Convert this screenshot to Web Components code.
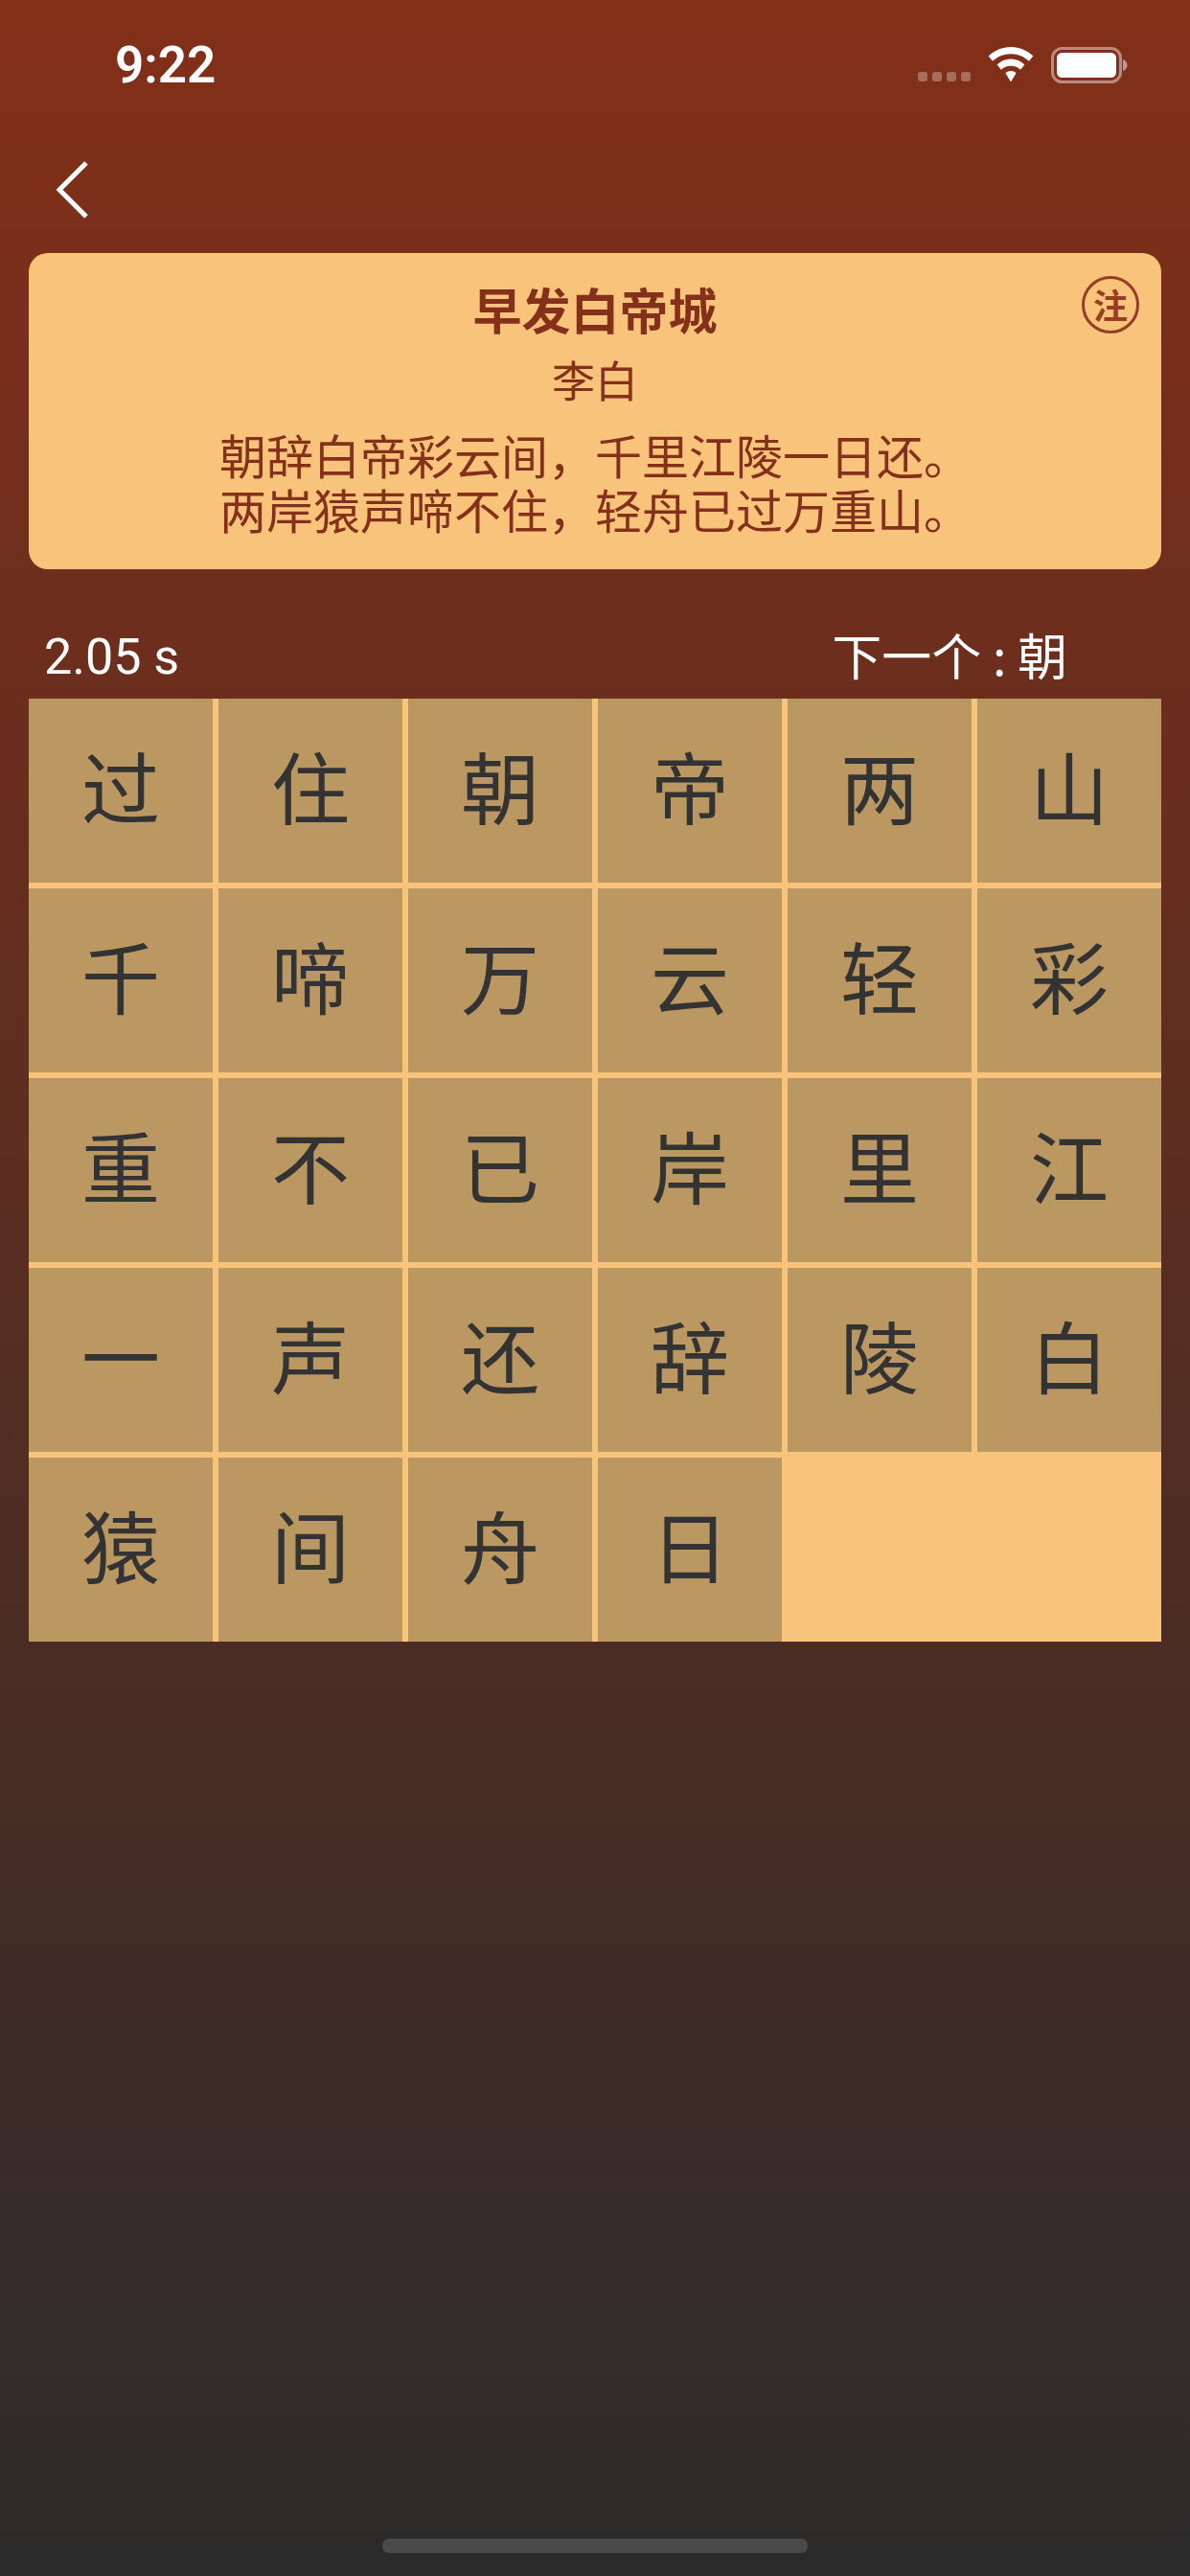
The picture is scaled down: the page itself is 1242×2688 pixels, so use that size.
<!DOCTYPE html>
<html lang="zh">
<head>
<meta charset="utf-8">
<title>早发白帝城</title>
<style>
html, body { margin: 0; padding: 0; }
</style>
</head>
<body>
<app-screen>
    <status-bar time="9:22"></status-bar>
    <nav-bar></nav-bar>
    <poem-card>
        <span slot="title">早发白帝城</span>
        <span slot="author">李白</span>
        <span slot="line">朝辞白帝彩云间，千里江陵一日还。</span>
        <span slot="line">两岸猿声啼不住，轻舟已过万重山。</span>
    </poem-card>
    <game-info time="2.05 s" next="朝"></game-info>
    <char-grid chars="过住朝帝两山千啼万云轻彩重不已岸里江一声还辞陵白猿间舟日"></char-grid>
    <home-bar></home-bar>
</app-screen>

<script>
const CJK = '"Noto Sans CJK SC", "Noto Sans", sans-serif';

//Pantalla completa, el degradado va aqui
class AppScreen extends HTMLElement {
    constructor() {
        super();
        this.attachShadow({ mode: "open" });
    }
    connectedCallback() {
        this.shadowRoot.innerHTML = `
        <style>
            :host {
                display: flex;
                flex-direction: column;
                width: 1242px;
                height: 2688px;
                overflow: hidden;
                background: linear-gradient(180deg, #832f18 0%, #2b2b2b 100%);
                font-family: ${CJK};
            }
        </style>
        <slot></slot>
        `;
    }
}

class StatusBar extends HTMLElement {
    constructor() {
        super();
        this.attachShadow({ mode: "open" });
    }
    connectedCallback() {
        this.shadowRoot.innerHTML = `
        <style>
            :host {
                display: flex;
                justify-content: space-between;
                height: 130px;
                padding: 38px 65px 0 120px;
                box-sizing: border-box;
                color: #fff;
            }
            .time {
                font: 600 53px/60px Roboto, "Liberation Sans", sans-serif;
            }
            .icons {
                display: flex;
                align-items: flex-start;
                padding-top: 11px;
            }
            .dots {
                display: flex;
                gap: 5px;
                margin-top: 26px;
                margin-right: 18px;
            }
            .dots i {
                width: 10px;
                height: 10px;
                border-radius: 3px;
                background: rgba(255, 255, 255, .3);
            }
            .wifi { margin-right: 18px; }
            svg { display: block; }
        </style>
        <div class="time">${this.getAttribute("time")}</div>
        <div class="icons">
            <div class="dots"><i></i><i></i><i></i><i></i></div>
            <svg class="wifi" width="48" height="37" viewBox="0 0 48 37">
                <path fill="#fff" d="M24 0C15 0 7 3.600 .6 9.500L5 14.800C10 10 16.700 7.200 24 7.200S38 10 43 14.800L47.400 9.500C41 3.600 33 0 24 0Z"/>
                <path fill="#fff" d="M24 12.500C18.500 12.500 13.500 14.700 9.600 18.400L14 23.700C16.600 21.200 20.100 19.700 24 19.700S31.400 21.200 34 23.700L38.400 18.400C34.500 14.700 29.500 12.500 24 12.500Z"/>
                <path fill="#fff" d="M24 25C21.800 25 19.900 25.800 18.400 27.200L24 36.500L29.600 27.200C28.100 25.800 26.200 25 24 25Z"/>
            </svg>
            <svg width="80" height="38" viewBox="0 0 80 38">
                <rect x="1.500" y="1.500" width="71" height="35" rx="10" fill="none" stroke="#fff" stroke-opacity=".45" stroke-width="3"/>
                <rect x="6" y="6" width="62" height="26" rx="5.500" fill="#fff"/>
                <path fill="#fff" fill-opacity=".5" d="M75 13C78 14 79.500 16.500 79.500 19S78 24 75 25Z"/>
            </svg>
        </div>
        `;
    }
}

class NavBar extends HTMLElement {
    constructor() {
        super();
        this.attachShadow({ mode: "open" });
    }
    connectedCallback() {
        this.shadowRoot.innerHTML = `
        <style>
            :host {
                display: block;
                height: 134px;
                padding: 38px 0 0 59px;
                box-sizing: border-box;
            }
            svg { display: block; }
        </style>
        <svg width="34" height="60" viewBox="0 0 34 60">
            <path d="M31 2L3 30L31 58" fill="none" stroke="#fff" stroke-width="5"/>
        </svg>
        `;
    }
}

//Tarjeta del poema: titulo, autor y versos por slot
class PoemCard extends HTMLElement {
    constructor() {
        super();
        this.attachShadow({ mode: "open" });
    }
    connectedCallback() {
        this.shadowRoot.innerHTML = `
        <style>
            :host {
                display: block;
                position: relative;
                margin: 0 30px;
                height: 330px;
                box-sizing: border-box;
                padding-top: 24px;
                border-radius: 20px;
                background: #f8c37b;
                color: #85301a;
                text-align: center;
            }
            ::slotted(span) { display: block; }
            .title { font-size: 51px; line-height: 68px; font-weight: 600; }
            .author { font-size: 45px; line-height: 64px; margin-top: 8px; }
            .lines { display: flex; flex-direction: column; font-size: 49px; line-height: 57px; margin-top: 17px; }
            .note {
                position: absolute;
                top: 24px;
                right: 23px;
                width: 60px;
                height: 60px;
                box-sizing: border-box;
                border: 3px solid #973d22;
                border-radius: 50%;
                color: #973d22;
                font-size: 36px;
                font-weight: 600;
                line-height: 52px;
            }
        </style>
        <div class="title"><slot name="title"></slot></div>
        <div class="author"><slot name="author"></slot></div>
        <div class="lines"><slot name="line"></slot></div>
        <div class="note">注</div>
        `;
    }
}

class GameInfo extends HTMLElement {
    constructor() {
        super();
        this.attachShadow({ mode: "open" });
    }
    connectedCallback() {
        this.shadowRoot.innerHTML = `
        <style>
            :host {
                display: flex;
                justify-content: space-between;
                align-items: center;
                height: 135px;
                padding: 38px 128px 0 46px;
                box-sizing: border-box;
                color: #fff;
                font-size: 52px;
            }
            .time { font: 400 52px Roboto, "Liberation Sans", sans-serif; margin-top: 10px; }
            .next { margin-top: 3px; }
        </style>
        <div class="time">${this.getAttribute("time")}</div>
        <div class="next">下一个 : ${this.getAttribute("next")}</div>
        `;
    }
}

class CharCell extends HTMLElement {
    constructor() {
        super();
        this.attachShadow({ mode: "open" });
    }
    connectedCallback() {
        this.shadowRoot.innerHTML = `
        <style>
            :host {
                display: flex;
                align-items: center;
                justify-content: center;
                box-sizing: border-box;
                padding-bottom: 12px;
                background: #bb9761;
                color: #333;
                font-size: 82px;
                line-height: 1;
            }
        </style>
        <slot></slot>
        `;
    }
}

class CharGrid extends HTMLElement {
    constructor() {
        super();
        this.attachShadow({ mode: "open" });
    }
    connectedCallback() {
        const cells = [...this.getAttribute("chars")]
            .map(c => `<char-cell>${c}</char-cell>`)
            .join("");
        this.shadowRoot.innerHTML = `
        <style>
            :host {
                display: grid;
                grid-template-columns: repeat(6, 192px);
                grid-auto-rows: 192px;
                gap: 6px;
                margin: 0 30px;
                background: #f8c37b;
            }
        </style>
        ${cells}
        `;
    }
}

class HomeBar extends HTMLElement {
    constructor() {
        super();
        this.attachShadow({ mode: "open" });
    }
    connectedCallback() {
        this.shadowRoot.innerHTML = `
        <style>
            :host {
                display: block;
                width: 444px;
                height: 15px;
                margin: auto auto 24px;
                border-radius: 7px;
                background: #4a4a4a;
            }
        </style>
        `;
    }
}

customElements.define("app-screen", AppScreen);
customElements.define("status-bar", StatusBar);
customElements.define("nav-bar", NavBar);
customElements.define("poem-card", PoemCard);
customElements.define("game-info", GameInfo);
customElements.define("char-cell", CharCell);
customElements.define("char-grid", CharGrid);
customElements.define("home-bar", HomeBar);
</script>
</body>
</html>
